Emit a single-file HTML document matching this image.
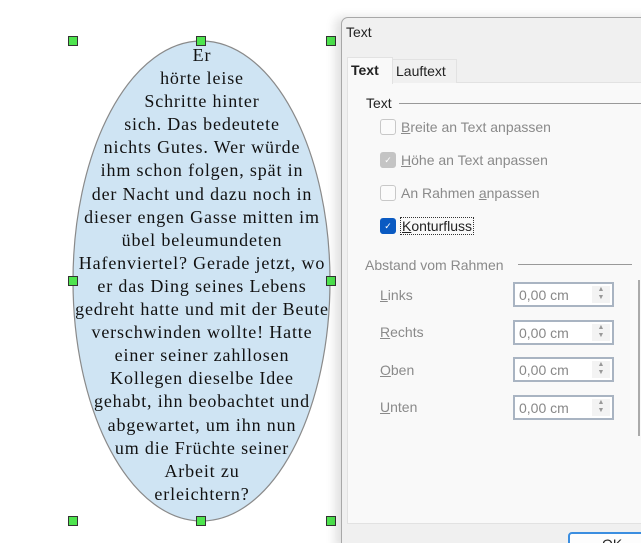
<!DOCTYPE html>
<html style="overflow:hidden;height:543px"><head><meta charset="utf-8"><style>
body{margin:0;width:641px;height:543px;overflow:hidden;background:#fff;position:relative;font-family:"Liberation Sans",sans-serif}
.h{position:absolute;width:8px;height:8px;background:#4ee44e;border:1px solid #333}
.txt{position:absolute;left:63px;top:44px;width:278px;text-align:center;font-family:"Liberation Serif",serif;font-size:18px;letter-spacing:0.85px;line-height:23.1px;color:#111}
.dlg{position:absolute;left:341px;top:17px;width:310px;height:530px;background:#f0f0f0;border:1px solid #a8a8a8;border-radius:7px 0 0 0;box-shadow:-6px 0 10px rgba(0,0,0,.12)}
.a{position:absolute;font-size:14px;color:#222;white-space:nowrap}
.g{color:#8a8a8a}
.cb{position:absolute;width:14px;height:14px;border:1px solid #c8c8c8;border-radius:3px;background:#fbfbfb}
.sp{position:absolute;left:513px;width:101px;height:25px;border:2px solid #a9b4c2;background:#fff;box-sizing:border-box}
.sp span{position:absolute;left:4px;top:3px;font-size:14px;color:#888}
.sp i{position:absolute;right:2px;top:2px;width:18px;height:17px;background:#f3f3f3;font-style:normal;font-size:7px;color:#999;text-align:center;line-height:8px}
u{text-decoration:underline}
</style></head><body>
<svg style="position:absolute;left:0;top:0" width="341" height="543"><ellipse cx="201.5" cy="281" rx="128.5" ry="240" fill="#cfe4f3" stroke="#8a8a8a" stroke-width="1.2"/></svg>
<div class="txt">Er<br>hörte leise<br>Schritte hinter<br>sich. Das bedeutete<br>nichts Gutes. Wer würde<br>ihm schon folgen, spät in<br>der Nacht und dazu noch in<br>dieser engen Gasse mitten im<br>übel beleumundeten<br>Hafenviertel? Gerade jetzt, wo<br>er das Ding seines Lebens<br>gedreht hatte und mit der Beute<br>verschwinden wollte! Hatte<br>einer seiner zahllosen<br>Kollegen dieselbe Idee<br>gehabt, ihn beobachtet und<br>abgewartet, um ihn nun<br>um die Früchte seiner<br>Arbeit zu<br>erleichtern?</div>
<div class="h" style="left:68px;top:36px"></div><div class="h" style="left:196px;top:36px"></div><div class="h" style="left:326px;top:36px"></div>
<div class="h" style="left:68px;top:276px"></div><div class="h" style="left:326px;top:276px"></div>
<div class="h" style="left:68px;top:516px"></div><div class="h" style="left:196px;top:516px"></div><div class="h" style="left:326px;top:516px"></div>
<div class="dlg"></div>
<div class="a" style="left:346px;top:24px;font-size:14px">Text</div>
<div style="position:absolute;left:347px;top:82px;width:300px;height:440px;background:#f9f9f9;border:1px solid #e2e2e2"></div>
<div style="position:absolute;left:347px;top:57px;width:44px;height:26px;background:#f9f9f9;border:1px solid #e2e2e2;border-bottom:none"></div>
<div style="position:absolute;left:392px;top:59px;width:63px;height:23px;background:#f0f0f0;border:1px solid #e2e2e2;border-bottom:none"></div>
<div class="a" style="left:351px;top:62px;font-weight:bold;font-size:14px">Text</div>
<div class="a" style="left:396px;top:63px;font-size:14px">Lauftext</div>
<div class="a" style="left:366px;top:95px;font-size:14px">Text</div>
<div style="position:absolute;left:399px;top:103px;width:242px;height:1px;background:#999"></div>
<div class="cb" style="left:380px;top:119px"></div><div class="a g" style="left:401px;top:119px"><u>B</u>reite an Text anpassen</div>
<div class="cb" style="left:380px;top:152px;background:#c4c4c4;border-color:#c4c4c4;color:#fff;font-size:9px;text-align:center;line-height:14px">✓</div><div class="a g" style="left:401px;top:152px"><u>H</u>öhe an Text anpassen</div>
<div class="cb" style="left:380px;top:185px"></div><div class="a g" style="left:401px;top:185px">An Rahmen <u>a</u>npassen</div>
<div class="cb" style="left:380px;top:218px;background:#0a5ac2;border-color:#0a5ac2;color:#fff;font-size:9px;text-align:center;line-height:14px">✓</div><div class="a" style="left:400px;top:217px;border:1px dotted #333;padding:0 1px"><u>K</u>onturfluss</div>
<div class="a g" style="left:365px;top:257px">Abstand vom Rahmen</div>
<div style="position:absolute;left:518px;top:264px;width:114px;height:1px;background:#999"></div>
<div class="a g" style="left:380px;top:287px"><u>L</u>inks</div><div class="sp" style="top:282px"><span>0,00 cm</span><i>▲<br>▼</i></div>
<div class="a g" style="left:380px;top:324px"><u>R</u>echts</div><div class="sp" style="top:320px"><span>0,00 cm</span><i>▲<br>▼</i></div>
<div class="a g" style="left:380px;top:362px"><u>O</u>ben</div><div class="sp" style="top:357px"><span>0,00 cm</span><i>▲<br>▼</i></div>
<div class="a g" style="left:380px;top:399px"><u>U</u>nten</div><div class="sp" style="top:395px"><span>0,00 cm</span><i>▲<br>▼</i></div>
<div style="position:absolute;left:638px;top:280px;width:2px;height:156px;background:#aaa"></div>
<div style="position:absolute;left:568px;top:532px;width:80px;height:20px;border:2px solid #3b8ee0;border-radius:4px;background:#fdfdfd"></div>
<div class="a" style="left:602px;top:536px">OK</div>
</body></html>
